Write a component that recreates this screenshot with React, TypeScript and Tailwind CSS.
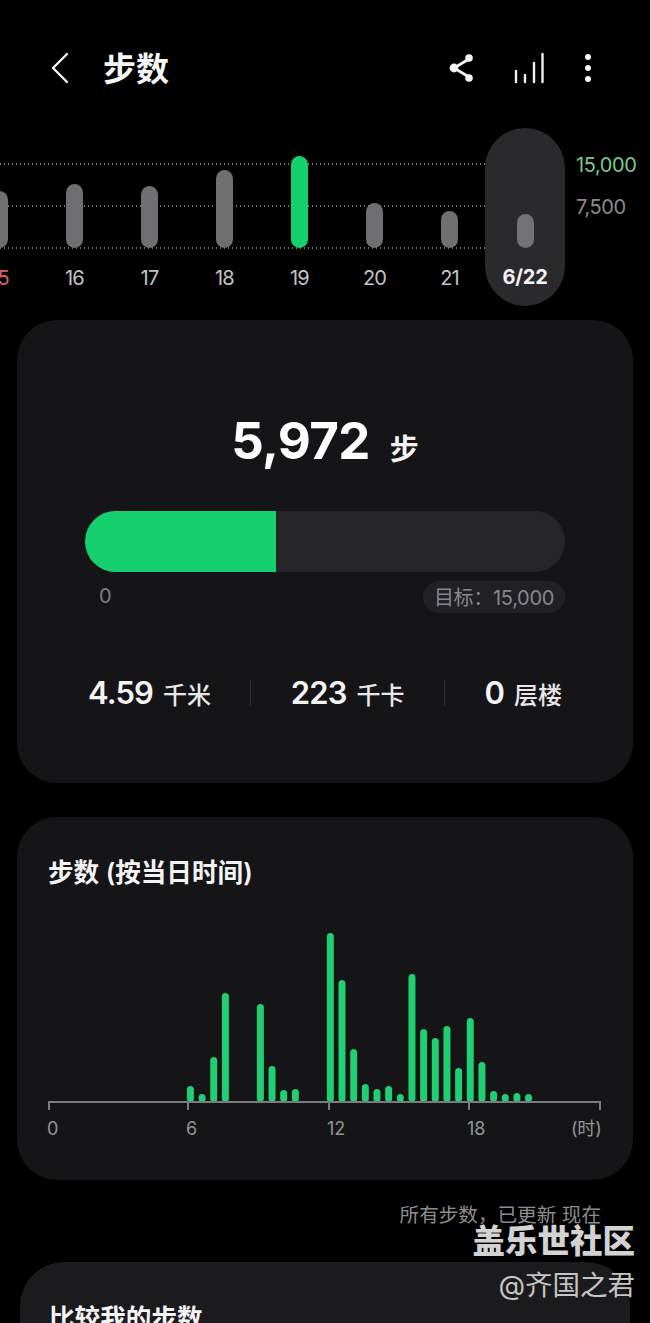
import React from "react";

const font = { fontFamily: '"Inter","Noto Sans CJK SC",sans-serif' };

const week = [
  { label: "15", h: 57, red: true },
  { label: "16", h: 64 },
  { label: "17", h: 62 },
  { label: "18", h: 78 },
  { label: "19", h: 92, green: true },
  { label: "20", h: 45 },
  { label: "21", h: 37 },
];

const hourly: [number, number][] = [
  [12, 16], [13, 8], [14, 45], [15, 109], [18, 98], [19, 36], [20, 12], [21, 13],
  [24, 169], [25, 122], [26, 53], [27, 18], [28, 13], [29, 16], [30, 8], [31, 128],
  [32, 73], [33, 64], [34, 76], [35, 34], [36, 84], [37, 40], [38, 11], [39, 8], [40, 9], [41, 8],
];

function Dots() {
  return (
    <div className="h-[2px] w-full bg-[repeating-linear-gradient(90deg,#77787a_0,#77787a_1.5px,transparent_1.5px,transparent_4px)]" />
  );
}

function Stat({ value, unit }: { value: string; unit: string }) {
  return (
    <div className="flex items-baseline gap-[10px]">
      <span className="text-[31px] font-semibold text-[#f4f4f5] tracking-[-0.9px]">{value}</span>
      <span className="text-[24px] font-medium text-[#e8e8ea]">{unit}</span>
    </div>
  );
}

export default function App() {
  return (
    <div style={font} className="relative h-[1323px] w-[650px] overflow-hidden bg-black text-white">
      {/* Header */}
      <header className="flex h-[128px] items-center pt-[8px] pl-[50px] pr-[54px]">
        <svg width="20" height="32" viewBox="0 0 20 32" fill="none" stroke="#f2f2f2" strokeWidth="2.4" strokeLinecap="round" strokeLinejoin="round">
          <path d="M17 2 L3 16 L17 30" />
        </svg>
        <h1 className="ml-[33px] mt-[3px] text-[33px] font-bold leading-none text-[#f6f6f6]">步数</h1>
        <div className="ml-auto flex items-center">
          <svg width="26" height="30" viewBox="0 0 26 30" fill="#f5f5f5" stroke="#f5f5f5" strokeWidth="2.8">
            <path d="M20 6 L5 15 L20 24" fill="none" />
            <circle cx="20" cy="5" r="3.8" stroke="none" />
            <circle cx="5" cy="15" r="4.4" stroke="none" />
            <circle cx="20" cy="25" r="3.8" stroke="none" />
          </svg>
          <svg className="ml-[39px]" width="30" height="32" viewBox="0 0 30 32" fill="none" stroke="#f0f0f0" strokeWidth="2.4" strokeLinecap="round">
            <path d="M2 30 V19 M11 30 V23 M20 30 V11 M28.5 30 V2" />
          </svg>
          <svg className="ml-[36px]" width="16" height="30" viewBox="0 0 16 30" fill="#f5f5f5">
            <circle cx="8" cy="4" r="3" />
            <circle cx="8" cy="15" r="3" />
            <circle cx="8" cy="26" r="3" />
          </svg>
        </div>
      </header>

      {/* Weekly chart */}
      <section className="relative h-[178px] w-[650px]">
        <div className="absolute left-0 top-[35px] flex h-[86px] w-[485px] flex-col justify-between">
          <Dots />
          <Dots />
          <Dots />
        </div>
        <div className="relative ml-[-38px] flex h-full">
          {week.map((d) => (
            <div key={d.label} className="flex w-[75px] flex-col items-center">
              <div className="flex h-[120px] items-end">
                <div
                  className={d.green ? "w-[17px] rounded-full bg-[#14d06e]" : "w-[17px] rounded-full bg-[#6f6f72]"}
                  style={{ height: d.h }}
                />
              </div>
              <span className={d.red ? "mt-[16px] text-[20px] leading-[28px] tracking-[-0.8px] text-[#d9636b]" : "mt-[16px] text-[20px] leading-[28px] tracking-[-0.8px] text-[#c4c4c6]"}>
                {d.label}
              </span>
            </div>
          ))}
          <div className="ml-[-2px] flex h-[178px] w-[80px] flex-col items-center rounded-full bg-[#2a2a2d]">
            <div className="flex h-[120px] items-end">
              <div className="h-[34px] w-[17px] rounded-full bg-[#737376]" />
            </div>
            <span className="mt-[15px] text-[20px] font-bold leading-[28px] tracking-[-0.2px] text-[#f4f4f4]">6/22</span>
          </div>
          <div className="ml-[11px] mt-[23px] flex flex-col gap-[14px] text-[20px] leading-[28px] tracking-[-0.4px]">
            <span className="text-[#7cc795]">15,000</span>
            <span className="text-[#8b8b8d]">7,500</span>
          </div>
        </div>
      </section>

      {/* Summary card */}
      <section className="mx-[17px] mt-[14px] flex h-[463px] flex-col rounded-[40px] bg-[#151518] px-[68px]">
        <div className="mt-[86px] flex h-[68px] items-center justify-center">
          <span className="text-[51px] font-bold leading-none tracking-[-0.6px] text-white">5,972</span>
          <span className="ml-[20px] mt-[18px] text-[29px] font-semibold leading-none text-[#f2f2f2]">步</span>
        </div>
        <div className="mt-[37px] h-[61px] overflow-hidden rounded-full bg-[#26262a]">
          <div className="h-full w-[191px] bg-[#14d06e]" />
        </div>
        <div className="mt-[9px] flex items-start justify-between">
          <span className="ml-[14px] mt-[2px] text-[20px] leading-[26px] text-[#7d7e81]">0</span>
          <span className="flex h-[32px] w-[142px] items-center justify-center rounded-full bg-[#212125] pt-[2px] text-[20px] tracking-[-0.3px] text-[#86878a]">目标：15,000</span>
        </div>
        <div className="mt-[62px] flex h-[36px] items-center justify-between px-[3px]">
          <Stat value="4.59" unit="千米" />
          <div className="h-[26px] w-px bg-[#2e2f33]" />
          <Stat value="223" unit="千卡" />
          <div className="h-[26px] w-px bg-[#2e2f33]" />
          <Stat value="0" unit="层楼" />
        </div>
      </section>

      {/* Hourly card */}
      <section className="mx-[17px] mt-[34px] h-[363px] rounded-[40px] bg-[#151518] px-[31px] pt-[38px]">
        <h2 className="text-[25.6px] font-semibold leading-[36px] text-[#f4f4f5]">步数 (按当日时间)</h2>
        <svg className="mt-[42px] block" width="554" height="178" viewBox="0 0 554 178">
          {hourly.map(([slot, h]) => (
            <rect key={slot} x={slot * 11.66 - 1} y={169 - h} width={7} height={h} rx={3.5} fill="#1fcf72" />
          ))}
          <path d="M1 177 V169 H552 V177 M140 169 V177 M281 169 V177 M421 169 V177" fill="none" stroke="#7b7c7e" strokeWidth="2" />
        </svg>
        <div className="mt-[2px] flex h-[30px] w-[554px] items-center text-[18px] text-[#939496]">
          <span className="ml-[-1px] w-[139px]">0</span>
          <span className="w-[141px]">6</span>
          <span className="w-[140px]">12</span>
          <span className="w-[104px]">18</span>
          <span className="tracking-[-0.2px]">(时)</span>
        </div>
      </section>

      <p className="mr-[49px] mt-[21px] text-right text-[19.6px] leading-[28px] text-[#8c8d8f]">所有步数，已更新 现在</p>

      {/* Next card, clipped by the page */}
      <section className="mx-[20px] mt-[33px] h-[200px] rounded-[44px] bg-[#1b1b1d] px-[29px] pt-[39px]">
        <h2 className="text-[25.6px] font-semibold leading-[36px] text-[#f4f4f5]">比较我的步数</h2>
      </section>

      {/* Watermark */}
      <div className="absolute right-[15px] top-[1222px] flex flex-col items-end">
        <span className="text-[32.5px] font-black leading-[40px] text-[#d2d2d2]">盖乐世社区</span>
        <span className="mt-[3px] text-[27.5px] leading-[40px] text-[#c4c4c4]">@齐国之君</span>
      </div>
    </div>
  );
}
